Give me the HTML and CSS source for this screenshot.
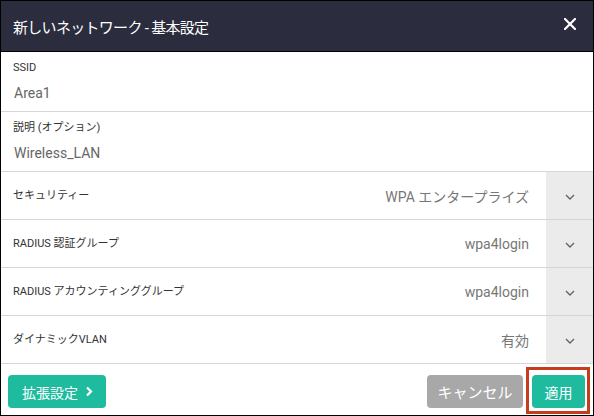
FILE: index.html
```html
<!DOCTYPE html>
<html lang="ja">
<head>
  <meta charset="UTF-8">
  <title>新しいネットワーク - 基本設定</title>
  <link rel="stylesheet" href="styles.css">
</head>
<body>
  <div class="dialog">
    <div class="header">
      <span class="title">新しいネットワーク - 基本設定</span>
      <svg class="close" width="12" height="12" viewBox="0 0 12 12">
        <path d="M1 1L11 11M11 1L1 11" stroke="#fff" stroke-width="2.2" stroke-linecap="square"/>
      </svg>
    </div>

    <div class="field">
      <div class="label">SSID</div>
      <div class="value">Area1</div>
    </div>
    <div class="field">
      <div class="label">説明 (オプション)</div>
      <div class="value">Wireless_LAN</div>
    </div>

    <div class="select-row">
      <div class="label">セキュリティー</div>
      <div class="selected">WPA エンタープライズ</div>
      <div class="arrow"><svg width="10" height="6" viewBox="0 0 10 6"><path d="M1 1L5 5L9 1" fill="none" stroke="#666" stroke-width="1.4"/></svg></div>
    </div>
    <div class="select-row">
      <div class="label">RADIUS 認証グループ</div>
      <div class="selected">wpa4login</div>
      <div class="arrow"><svg width="10" height="6" viewBox="0 0 10 6"><path d="M1 1L5 5L9 1" fill="none" stroke="#666" stroke-width="1.4"/></svg></div>
    </div>
    <div class="select-row">
      <div class="label">RADIUS アカウンティンググループ</div>
      <div class="selected">wpa4login</div>
      <div class="arrow"><svg width="10" height="6" viewBox="0 0 10 6"><path d="M1 1L5 5L9 1" fill="none" stroke="#666" stroke-width="1.4"/></svg></div>
    </div>
    <div class="select-row">
      <div class="label">ダイナミックVLAN</div>
      <div class="selected">有効</div>
      <div class="arrow"><svg width="10" height="6" viewBox="0 0 10 6"><path d="M1 1L5 5L9 1" fill="none" stroke="#666" stroke-width="1.4"/></svg></div>
    </div>

    <div class="footer">
      <button class="btn btn-teal btn-more">拡張設定
        <svg width="8" height="11" viewBox="0 0 8 11"><path d="M2 1.5L6 5.5L2 9.5" fill="none" stroke="#fff" stroke-width="2.2"/></svg>
      </button>
      <div class="spacer"></div>
      <button class="btn btn-gray">キャンセル</button>
      <div class="highlight">
        <button class="btn btn-teal btn-apply">適用</button>
      </div>
    </div>
  </div>
</body>
</html>
```

FILE: styles.css
```css
body {
  margin: 0;
  font-family: Roboto, "Noto Sans CJK JP", sans-serif;
  background-color: #fff;
}
.dialog {
  width: 594px;
  height: 416px;
  box-sizing: border-box;
  border: 1px solid #000;
  display: flex;
  flex-direction: column;
  overflow: hidden;
}
.header {
  height: 50px;
  background-color: #2b2c3d;
  border-bottom: 1px solid #000;
  display: flex;
  align-items: center;
  padding: 0 17px 0 12px;
  flex-shrink: 0;
}
.title {
  flex: 1;
  color: #fff;
  font-size: 15px;
  letter-spacing: -0.7px;
}
.close {
  margin-top: -4px;
}
.field {
  height: 60px;
  box-sizing: border-box;
  border-bottom: 1px solid #d6d6d6;
  padding: 8px 0 0 12px;
}
.label {
  font-size: 11px;
  color: #333;
  line-height: 16px;
}
.value {
  font-size: 14px;
  color: #666;
  margin-top: 7px;
  line-height: 20px;
  padding-left: 1px;
}
.select-row {
  height: 48px;
  box-sizing: border-box;
  border-bottom: 1px solid #d6d6d6;
  display: flex;
  align-items: center;
  padding-left: 12px;
}
.select-row .label {
  flex: 1;
}
.selected {
  font-size: 14px;
  color: #777;
  padding-right: 17px;
}
.arrow {
  width: 47px;
  align-self: stretch;
  background-color: #ebebeb;
  display: flex;
  align-items: center;
  justify-content: center;
  padding-top: 3px;
}
.footer {
  flex: 1;
  display: flex;
  align-items: flex-start;
  padding: 3px 3px 0 7px;
}
.spacer {
  flex: 1;
}
.btn {
  height: 33px;
  border: none;
  border-radius: 4px;
  color: #fff;
  font-family: Roboto, "Noto Sans CJK JP", sans-serif;
  font-size: 14px;
  padding: 0;
  display: flex;
  align-items: center;
  justify-content: center;
}
.btn-teal {
  background-color: #1fbb9f;
}
.btn-more {
  width: 98px;
  margin-top: 8px;
  justify-content: flex-start;
  padding-left: 14px;
  gap: 7px;
}
.btn-gray {
  background-color: #a8a8a8;
  width: 96px;
  margin-top: 8px;
  margin-right: 3px;
  font-size: 15px;
}
.highlight {
  border: 3px solid #c63d1c;
  padding: 5px 2px 3px 3px;
}
.btn-apply {
  width: 53px;
}
```
